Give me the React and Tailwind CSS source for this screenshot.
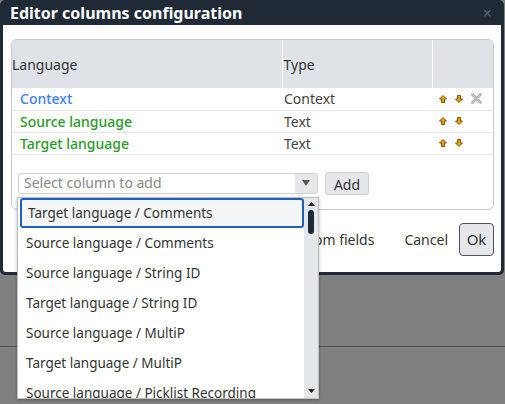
import { useState } from 'react'

const rows = [
  { name: 'Context', type: 'Context', color: 'text-[#3b82f6]', removable: true },
  { name: 'Source language', type: 'Text', color: 'text-[#2a9a2a]', removable: false },
  { name: 'Target language', type: 'Text', color: 'text-[#2a9a2a]', removable: false },
]

const options = [
  'Target language / Comments',
  'Source language / Comments',
  'Source language / String ID',
  'Target language / String ID',
  'Source language / MultiP',
  'Target language / MultiP',
  'Source language / Picklist Recording',
]

function Arrow({ down }) {
  return (
    <svg width="8" height="8" viewBox="0 0 8 8" className={down ? 'rotate-180' : ''}>
      <path d="M4 0.5 L7.5 4 L5.5 4 L5.5 7.5 L2.5 7.5 L2.5 4 L0.5 4 Z" fill="#e0a800" stroke="#8a4a10" strokeWidth="1" strokeLinejoin="round" />
    </svg>
  )
}

function RemoveIcon() {
  return (
    <svg width="11" height="11" viewBox="0 0 11 11">
      <path d="M1.5 1.5 L9.5 9.5 M9.5 1.5 L1.5 9.5" stroke="#a8a8a8" strokeWidth="2.6" strokeLinecap="round" />
      <path d="M1.5 1.5 L9.5 9.5 M9.5 1.5 L1.5 9.5" stroke="#d4d4d4" strokeWidth="1" strokeLinecap="round" />
    </svg>
  )
}

export default function App() {
  const [selected] = useState(0)

  return (
    <div className="relative w-[505px] h-[404px] overflow-hidden bg-[#808080] font-['Noto_Sans',sans-serif]">
      {/* Dialog */}
      <div className="w-[504px] rounded-[5px] bg-[#202a36]">
        <div className="h-[25px] flex items-center justify-between pl-[10px] pr-[12px]">
          <span className="text-white font-bold text-[16px] leading-none">Editor columns configuration</span>
          <span className="text-[#5b6572] text-[16px] leading-none">×</span>
        </div>
        <div className="mx-[3px] pb-[3px]">
          <div className="bg-white rounded-b-[3px] pt-[14px] px-[8px] pr-[7px]">
            <div className="border border-[#c9c9c9] rounded-[6px] pb-[14px]">
              <table className="w-full border-collapse text-[14px]">
                <thead>
                  <tr className="h-[48px] bg-[#dfe3e8] text-[#333]">
                    <th className="w-[270px] text-left font-normal pl-0 border-r border-white">Language</th>
                    <th className="w-[150px] text-left font-normal pl-[1px] border-r border-white">Type</th>
                    <th></th>
                  </tr>
                </thead>
                <tbody>
                  {rows.map((r) => (
                    <tr key={r.name} className="h-[22px] border-b border-[#e6e6e6]">
                      <td className={`pl-[8px] font-medium ${r.color}`}>{r.name}</td>
                      <td className="pl-[2px] text-[#444]">{r.type}</td>
                      <td className="pl-[7px]">
                        <div className="flex items-center gap-[8px]">
                          <Arrow />
                          <Arrow down />
                          {r.removable && <RemoveIcon />}
                        </div>
                      </td>
                    </tr>
                  ))}
                </tbody>
              </table>
              <div className="flex items-center gap-[7px] pl-[6px] mt-[17px]">
                <div className="w-[300px] h-[21px] flex items-center bg-[#e5e7eb] border border-[#d0d0d0] rounded-[3px]">
                  <div className="flex-1 h-full bg-white rounded-l-[3px] pl-[5px] flex items-center text-[14px] text-[#888] leading-none">
                    Select column to add
                  </div>
                  <div className="w-[22px] flex justify-center">
                    <svg width="8" height="6" viewBox="0 0 8 6"><path d="M0 0 L8 0 L4 6 Z" fill="#555" /></svg>
                  </div>
                </div>
                <button className="w-[44px] h-[23px] bg-[#e5e7eb] border border-[#d0d0d0] rounded-[3px] text-[14px] text-[#333] leading-none pt-[3px]">
                  Add
                </button>
              </div>
            </div>
            <div className="pt-[13px] pb-[16px] flex items-center justify-end text-[14px] text-[#333]">
              <span className="mr-[30px]">Custom fields</span>
              <span className="mr-[11px]">Cancel</span>
              <button className="w-[35px] h-[33px] bg-[#e5e7eb] border border-[#555] rounded-[4px] text-[15px] leading-none">
                Ok
              </button>
            </div>
          </div>
        </div>
      </div>

      {/* Background rule */}
      <div className="mt-[71px] border-t border-[#4e5260]"></div>

      {/* Dropdown list */}
      <div className="absolute left-[17px] top-[197px] w-[302px] h-[202px] bg-white border border-[#c0c0c0] shadow-[0_1px_3px_rgba(0,0,0,0.3)] flex overflow-hidden">
        <div className="flex-1 pl-[2px]">
          {options.map((o, i) => (
            <div
              key={o}
              className={`h-[30px] flex items-center pl-[6px] text-[13.5px] text-[#333] whitespace-nowrap ${
                i === selected ? 'border-2 border-[#1f5fc4] rounded-[3px] bg-[#f3f5f7] pl-[5px]' : ''
              }`}
            >
              {o}
            </div>
          ))}
        </div>
        <div className="w-[14px] bg-[#e4e7ea] flex flex-col items-center">
          <svg width="7" height="4" viewBox="0 0 7 4" className="mt-[4px]"><path d="M0 4 L7 4 L3.5 0 Z" fill="#222" /></svg>
          <div className="w-[6px] h-[24px] rounded-full bg-[#1f2937] mt-[4px]"></div>
          <div className="flex-1"></div>
          <svg width="7" height="4" viewBox="0 0 7 4" className="mb-[5px]"><path d="M0 0 L7 0 L3.5 4 Z" fill="#222" /></svg>
        </div>
      </div>
    </div>
  )
}
